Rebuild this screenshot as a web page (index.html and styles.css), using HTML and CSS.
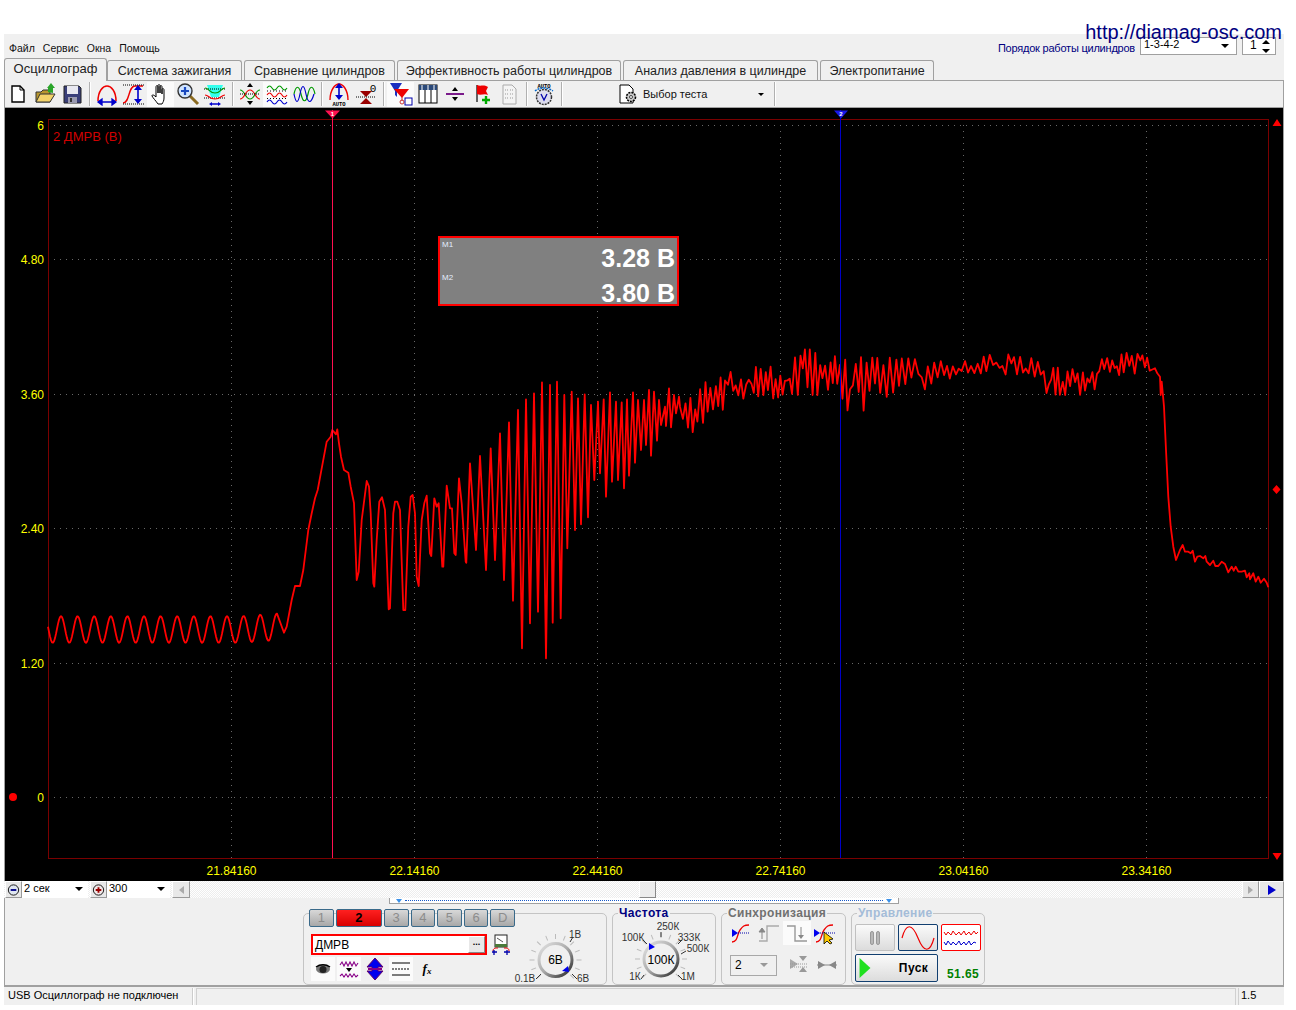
FILE: index.html
```html
<!DOCTYPE html>
<html lang="ru">
<head>
<meta charset="utf-8">
<title>Осциллограф</title>
<link rel="stylesheet" href="styles.css">
</head>
<body>
<svg class="defs" width="0" height="0" aria-hidden="true">
  <defs>
    <linearGradient id="ring" x1="0" y1="0" x2="1" y2="1">
      <stop offset="0" stop-color="#e4e4e4"/><stop offset=".5" stop-color="#aaa"/><stop offset="1" stop-color="#222"/>
    </linearGradient>
    <line id="tick" x1="0" y1="-21" x2="0" y2="-26" stroke="#bbb"/>
    <g id="ticks">
      <use href="#tick" transform="rotate(-135)"/><use href="#tick" transform="rotate(-112)"/><use href="#tick" transform="rotate(-90)"/><use href="#tick" transform="rotate(-68)"/><use href="#tick" transform="rotate(-45)"/><use href="#tick" transform="rotate(-22)"/><use href="#tick" transform="rotate(0)"/><use href="#tick" transform="rotate(22)"/><use href="#tick" transform="rotate(45)"/><use href="#tick" transform="rotate(68)"/><use href="#tick" transform="rotate(90)"/><use href="#tick" transform="rotate(112)"/><use href="#tick" transform="rotate(135)"/>
    </g>
  </defs>
</svg>
<div class="app">
  <a class="site-link">http://diamag-osc.com</a>

  <div class="menubar">
    <nav class="menu"><span>Файл</span><span>Сервис</span><span>Окна</span><span>Помощь</span></nav>
    <div class="order">
      <span class="order-label">Порядок работы цилиндров</span>
      <div class="order-combo"><span>1-3-4-2</span><i class="arrow"></i></div>
      <div class="order-spin"><span>1</span><div class="spin-arrows"><i class="arrow up"></i><i class="arrow"></i></div></div>
    </div>
  </div>

  <div class="tabs">
    <div class="tab active">Осциллограф</div>
    <div class="tab t2">Система зажигания</div>
    <div class="tab t3">Сравнение цилиндров</div>
    <div class="tab t4">Эффективность работы цилиндров</div>
    <div class="tab t5">Анализ давления в цилиндре</div>
    <div class="tab t6">Электропитание</div>
  </div>

  <div class="toolbar">
    <div class="tb"><svg viewBox="0 0 24 24"><path d="M6 4h8l4 4v12H6z" fill="#fff" stroke="#000" stroke-width="1.4"/><path d="M14 4v4h4" fill="none" stroke="#000"/></svg></div>
    <div class="tb"><svg viewBox="0 0 24 24"><path d="M3 10h5l2-2h7v12H3z" fill="#b8972e" stroke="#333"/><path d="M3 20l4-8h15l-5 8z" fill="#f2d36a" stroke="#333"/><path d="M15 10V6h-1l4-5 4 5h-2v5z" fill="#2aa52a"/></svg></div>
    <div class="tb"><svg viewBox="0 0 24 24"><path d="M4 4h15l2 2v15H4z" fill="#3a3f7a" stroke="#222"/><rect x="7" y="4" width="11" height="8" fill="#e8e8f0"/><rect x="8" y="15" width="9" height="6" fill="#9a9ab0"/><rect x="10" y="16" width="2" height="4" fill="#333"/></svg></div>
    <i class="sep"></i>
    <div class="tb"><svg viewBox="0 0 24 24"><path d="M3 19C3 9 8 4 12 4s9 5 9 15" fill="none" stroke="#e00" stroke-width="1.5"/><path d="M3 20h18M3 20l4-3v6zM21 20l-4-3v6z" fill="#00c" stroke="#00c" stroke-width="1.3"/></svg></div>
    <div class="tb"><svg viewBox="0 0 24 24"><path d="M1 21C8 21 6 4 13 4h8" fill="none" stroke="#e00" stroke-width="1.4"/><path d="M1 3h22M1 22h22" stroke="#000" stroke-dasharray="1 1" fill="none"/><path d="M16 4v17" stroke="#00c" stroke-width="1.6"/><path d="M16 3l-4 5h8zM16 22l-4-5h8z" fill="#00c"/></svg></div>
    <div class="tb on"><svg viewBox="0 0 24 24"><path d="M9 22c-2-3-5-6-6-8 0-2 2-1 4 1V5c0-2 2-2 2 0v6-7c0-2 2-2 2 0v7-6c0-2 2-2 2 0v7-4c0-2 2-2 2 0v8c0 3-1 4-2 6z" fill="#fff" stroke="#000"/></svg></div>
    <div class="tb"><svg viewBox="0 0 24 24"><path d="M14 14l8 8" stroke="#8a6a20" stroke-width="3"/><circle cx="9" cy="9" r="7" fill="#cfe4ff" stroke="#333" stroke-width="1.4"/><path d="M5 9h8M9 5v8" stroke="#1a4ac0" stroke-width="2.2"/></svg></div>
    <div class="tb"><svg viewBox="0 0 24 24"><path d="M4 3h16l-4 12H8z" fill="#3fe"/><path d="M1 7h22M1 16h22" stroke="#000" stroke-dasharray="1 1"/><path d="M2 6c4 0 4 5 10 5s6-5 10-5" fill="none" stroke="#090" stroke-width="1.2"/><path d="M2 13c4 0 4 4 10 4s6-4 10-4" fill="none" stroke="#e00" stroke-width="1.2"/><path d="M8 22h8" stroke="#00c" stroke-width="1.5"/><path d="M6 22l3-2v4zM18 22l-3-2v4z" fill="#00c"/></svg></div>
    <i class="sep"></i>
    <div class="tb"><svg viewBox="0 0 24 24"><path d="M2 8c5 0 5 9 10 9s5-9 10-9" fill="none" stroke="#090" stroke-width="1.2"/><path d="M2 17c5 0 5-9 10-9s5 9 10 9" fill="none" stroke="#e00" stroke-width="1.2"/><path d="M12 1L9 5h6zM12 23l-3-4h6z" fill="#000"/><path d="M2 12h20" stroke="#000" stroke-dasharray="1 1"/></svg></div>
    <div class="tb on"><svg viewBox="0 0 24 24"><path d="M2 6q2.500-4 5 0t5 0 5 0 5 0" fill="none" stroke="#090" stroke-width="1.1"/><path d="M2 13q2.500-4 5 0t5 0 5 0 5 0" fill="none" stroke="#e00" stroke-width="1.1"/><path d="M2 20q2.500-4 5 0t5 0 5 0 5 0" fill="none" stroke="#00c" stroke-width="1.1"/><path d="M2 9h20M2 16.500h20" stroke="#000" stroke-dasharray="1 2"/></svg></div>
    <div class="tb"><svg viewBox="0 0 24 24"><path d="M2 12C4 3 7 3 9 12s5 9 7 0 5-9 7 0" fill="none" stroke="#090" stroke-width="1.2"/><path d="M2 12C4 22 6 22 8 12S12 2 14 12s5 10 8 0" fill="none" stroke="#00c" stroke-width="1.2"/></svg></div>
    <i class="sep"></i>
    <div class="tb"><svg viewBox="0 0 24 24"><path d="M3 18C3 8 8 2 12 2s9 6 9 16" fill="none" stroke="#e00" stroke-width="1.4"/><path d="M12 3v14" stroke="#00c" stroke-width="1.6"/><path d="M12 1L8 6h8zM12 18l-4-5h8z" fill="#00c"/><text x="12" y="24" class="tiny">AUTO</text></svg></div>
    <div class="tb"><svg viewBox="0 0 24 24"><path d="M6 9l6 6 6-6zM6 22l6-6 6 6z" fill="#900"/><path d="M2 15h20" stroke="#000" stroke-dasharray="1 1"/><text x="19" y="10" class="zero">0</text></svg></div>
    <i class="sep"></i>
    <div class="tb on"><svg viewBox="0 0 24 24"><path d="M1 1h12L8 9v6L6 13V9z" fill="#1a2ec0"/><path d="M5 7h15l-7 9z" fill="#e00"/><path d="M13 15v4" stroke="#c33"/><circle cx="13" cy="20" r="2" fill="none" stroke="#c33"/><rect x="16" y="16" width="7" height="7" fill="#fff" stroke="#00a"/></svg></div>
    <div class="tb"><svg viewBox="0 0 24 24"><rect x="3" y="3" width="18" height="18" fill="#fff" stroke="#000"/><rect x="3" y="3" width="18" height="5" fill="#2c4a7a"/><path d="M9 8v13M15 8v13" stroke="#000"/><path d="M6 3v5M12 3v5M18 3v5" stroke="#fff"/></svg></div>
    <div class="tb"><svg viewBox="0 0 24 24"><path d="M3 12h18" stroke="#7a1a8a" stroke-width="2"/><path d="M12 5l-3 4h6zM12 19l-3-4h6z" fill="#000"/></svg></div>
    <div class="tb"><svg viewBox="0 0 24 24"><path d="M7 3v17" stroke="#333" stroke-width="1.5"/><path d="M7 3c4 2 6-1 11 2l-2 4 2 4c-4-2-7 1-11-1z" fill="#e00"/><path d="M16 14v8M12 18h8" stroke="#0a0" stroke-width="2.4"/></svg></div>
    <div class="tb"><svg viewBox="0 0 24 24"><path d="M6 3h9l4 4v15H6z" fill="#f4f4f4" stroke="#aaa"/><path d="M8 8h3M8 12h3M8 16h3M13 8h3M13 12h3M13 16h3" stroke="#999" stroke-dasharray="1 1"/></svg></div>
    <i class="sep"></i>
    <div class="tb"><svg viewBox="0 0 24 24"><text x="12" y="5.500" class="tiny">AUTO</text><circle cx="12" cy="15" r="7.500" fill="#dde" stroke="#333" stroke-width="1.500" stroke-dasharray="2 1"/><path d="M3 9c5-4 13-4 18 0" fill="none" stroke="#06c" stroke-dasharray="2 1" stroke-width="1.500"/><path d="M9 12l3 6 3-6" fill="none" stroke="#00a" stroke-width="1.300"/></svg></div>
    <i class="sep"></i>
    <div class="test-pick">
      <svg viewBox="0 0 20 24" class="test-icon"><path d="M2 3h9l4 4v14H2z" fill="#fff" stroke="#000"/><circle cx="13" cy="15" r="4.500" fill="#ccc" stroke="#000" stroke-dasharray="2 1" stroke-width="1.600"/><circle cx="13" cy="15" r="1.500" fill="#fff" stroke="#000" stroke-width=".7"/></svg>
      <span>Выбор теста</span><i class="arrow small"></i>
    </div>
    <i class="sep"></i>
  </div>

  <div class="scope">
    <svg class="plot" viewBox="5 108 1278 773" width="1278" height="773">
      <g class="grid">
        <path d="M48 125.500H1268M48 259.500H1268M48 394.500H1268M48 528.500H1268M48 663.500H1268M48 797.500H1268"/>
        <path d="M231.500 119V863M414.500 119V863M597.500 119V863M780.500 119V863M963.500 119V863M1146.500 119V863"/>
      </g>
      <rect x="48.500" y="119.500" width="1220" height="739" class="frame"/>
      <g class="ylabels">
        <text x="44" y="130">6</text><text x="44" y="264">4.80</text><text x="44" y="399">3.60</text><text x="44" y="533">2.40</text><text x="44" y="668">1.20</text><text x="44" y="802">0</text>
      </g>
      <g class="xlabels">
        <text x="231.500" y="875">21.84160</text><text x="414.500" y="875">22.14160</text><text x="597.500" y="875">22.44160</text><text x="780.500" y="875">22.74160</text><text x="963.500" y="875">23.04160</text><text x="1146.500" y="875">23.34160</text><text x="1329.500" y="875">23.64160</text>
      </g>
      <text x="53" y="141" class="ch-title">2 ДМРВ (В)</text>
      <polyline id="trace" class="trace" points=""/>
      <path d="M332.500 110V858" class="cur1"/>
      <path d="M325 110.500h15l-7.500 8z" class="mark1"/>
      <text x="332.500" y="116" class="mark-num">1</text>
      <path d="M840.500 110V858" class="cur2"/>
      <path d="M834 110.500h14l-7 8z" class="mark2"/>
      <text x="840.800" y="116" class="mark-num">2</text>
      <path d="M1277 119l4.500 7h-9zM1277 860l4.500-7h-9zM1276.500 485l4 4.500-4 4.500-4-4.500z" class="side-mark"/>
      <circle cx="13" cy="797" r="4" class="side-mark"/>
    </svg>
    <div class="readout">
      <div class="m-row"><span class="m-name">M1</span><span class="m-val">3.28 В</span></div>
      <div class="m-row"><span class="m-name">M2</span><span class="m-val">3.80 В</span></div>
    </div>
  </div>

  <div class="scrollrow">
    <div class="sq"><svg viewBox="0 0 16 16"><circle cx="8" cy="8" r="5.500" fill="#dfe6f0" stroke="#111"/><path d="M5 8h6" stroke="#008" stroke-width="2"/></svg></div>
    <div class="rcombo w1"><span>2 сек</span><i class="arrow"></i></div>
    <div class="sq plus"><svg viewBox="0 0 16 16"><circle cx="8" cy="8" r="5.500" fill="#f0e6e6" stroke="#111"/><path d="M5 8h6M8 5v6" stroke="#900" stroke-width="2"/></svg></div>
    <div class="rcombo w2"><span>300</span><i class="arrow"></i></div>
    <div class="sq left"><i class="tri-l"></i></div>
    <div class="track"><div class="thumb"></div></div>
    <div class="sq"><i class="tri-r gray"></i></div>
    <div class="sq wide"><i class="tri-r"></i></div>
  </div>

  <div class="panel">
    <div class="strip"><i class="tri-d"></i><span class="dots"></span><i class="tri-d"></i></div>
    <div class="groups">

      <section class="group g1">
        <div class="g1-left">
          <div class="channels">
            <b class="ch">1</b><b class="ch red">2</b><b class="ch">3</b><b class="ch">4</b><b class="ch">5</b><b class="ch">6</b><b class="ch">D</b>
          </div>
          <div class="name-row">
            <div class="name-box"><span>ДМРВ</span><b class="more">...</b></div>
            <svg viewBox="0 0 20 22" class="i20"><rect x="4" y="1" width="12" height="12" fill="#fff" stroke="#222"/><path d="M6 4l6 4" stroke="#555"/><rect x="4" y="10" width="12" height="3" fill="#4a7a3a"/><path d="M2 17c0-3 3-3 5-3M18 17c0-3-2-3-5-3" fill="none" stroke="#e00"/><path d="M3 21v-5M1 18h5M16 21v-5M13 18h6" stroke="#00a" stroke-width="1.300"/></svg>
          </div>
          <div class="tools">
            <div class="tool on"><svg viewBox="0 0 20 20"><ellipse cx="10" cy="10" rx="7" ry="4.500" fill="#777"/><circle cx="10" cy="10.500" r="3.500" fill="#222"/><path d="M3 8c4-3 10-3 14 0" fill="none" stroke="#000" stroke-width="1.500"/></svg></div>
            <div class="tool on"><svg viewBox="0 0 20 20"><path d="M1 6l2-3 2 4 2-4 2 4 2-4 2 4 2-4 2 4 2-3" fill="none" stroke="#808" stroke-width="1.100"/><path d="M1 17l2-2 2 3 2-3 2 3 2-3 2 3 2-3 2 3 2-2" fill="none" stroke="#808" stroke-width="1.100"/><path d="M7 9h6l-3 4z" fill="#000"/></svg></div>
            <div class="tool plain"><svg viewBox="0 0 20 24"><path d="M10 1L2 10h5v4H2l8 9 8-9h-5v-4h5z" fill="#00e" stroke="#606"/><path d="M3 12h14" stroke="#808" stroke-width="2"/></svg></div>
            <div class="tool on spaced"><svg viewBox="0 0 20 20"><path d="M1 4h18M1 16h18" stroke="#000" stroke-width="1.200"/><path d="M1 10h18" stroke="#000" stroke-dasharray="2 1"/></svg></div>
            <div class="tool plain fx"><i>f</i><i class="x">x</i></div>
          </div>
        </div>
        <svg class="knob k1" viewBox="0 0 88 72" width="88" height="72">
          <use href="#ticks" transform="translate(41.500 46)"/>
          <path d="M56 28l3-5M58 60l5 5M27 60l-5 5" stroke="#333"/>
          <circle cx="41.500" cy="46" r="16.500" class="ring"/>
          <path d="M48 57l6-5 1 6z" fill="#00e"/>
          <text x="41.500" y="50" class="kval">6В</text>
          <text x="61" y="24" class="kl">1В</text><text x="11" y="68" class="kl">0.1В</text><text x="69" y="68" class="kl">6В</text>
        </svg>
      </section>

      <section class="group g2">
        <h4 class="legend navy">Частота</h4>
        <svg class="knob" viewBox="0 0 104 72" width="104" height="72">
          <use href="#ticks" transform="translate(49 46)"/>
          <path d="M49 19v5M31 27l4 4M66 31l4-4M74 38l-5 3M32 62l-3 4M66 62l4 4" stroke="#333"/>
          <circle cx="49" cy="46" r="17" class="ring"/>
          <path d="M37 30l6 4-6 3z" fill="#00e"/>
          <text x="49" y="50.500" class="kval big">100К</text>
          <text x="21" y="28" class="kl">100К</text><text x="56" y="17" class="kl">250К</text><text x="77" y="28" class="kl">333К</text><text x="86" y="39" class="kl">500К</text><text x="23" y="67" class="kl">1К</text><text x="76" y="67" class="kl">1М</text>
        </svg>
      </section>

      <section class="group g3">
        <h4 class="legend grayd">Синхронизация</h4>
        <div class="sync-row">
          <div class="sc"><svg viewBox="0 0 24 24"><path d="M3 21c6 0 5-8 8-12s4-5 9-5" fill="none" stroke="#e00" stroke-width="1.300"/><path d="M3 8l6 4-6 4z" fill="#00e"/><path d="M9 12h11" stroke="#00a" stroke-dasharray="1 1"/></svg></div>
          <div class="sc"><svg viewBox="0 0 24 24"><path d="M2 20h8V5h12" fill="none" stroke="#aaa" stroke-width="1.400"/><path d="M5 18V9M5 7l-3 4h6z" fill="#888" stroke="#888"/></svg></div>
          <div class="sc on"><svg viewBox="0 0 24 24"><path d="M2 5h8v15h12" fill="none" stroke="#999" stroke-width="1.400"/><path d="M16 6v9" stroke="#888"/><path d="M16 18l-3-4h6z" fill="#888"/></svg></div>
          <div class="sc"><svg viewBox="0 0 24 24"><path d="M3 21c6 0 5-8 8-12s4-5 9-5" fill="none" stroke="#e00" stroke-width="1.300"/><path d="M1 8l6 4-6 4z" fill="#00e"/><path d="M7 12h15" stroke="#00a" stroke-dasharray="1 1"/><path d="M11 11v12l3-3 3 3 2-1-3-3 4-1z" fill="#fc0" stroke="#000" stroke-width=".8"/></svg></div>
        </div>
        <div class="sync-row second">
          <div class="scombo"><span>2</span><i class="arrow gray"></i></div>
          <div class="sc push"><svg viewBox="0 0 24 24"><path d="M3 6l8 5-8 5z" fill="#aaa"/><path d="M3 11h18M3 14h18" stroke="#999" stroke-dasharray="1 1"/><path d="M16 8l-4-5h8zM16 14l-4 5h8z" fill="#999"/></svg></div>
          <div class="sc"><svg viewBox="0 0 24 24"><path d="M2 12h20" stroke="#888"/><path d="M3 8l7 4-7 4zM21 8l-7 4 7 4z" fill="#888"/></svg></div>
        </div>
      </section>

      <section class="group g4">
        <h4 class="legend bluish">Управление</h4>
        <div class="ctl-grid">
          <div class="ctl gray"><i class="pbar"></i><i class="pbar"></i></div>
          <div class="ctl navy-b"><svg viewBox="0 0 38 25"><path d="M3 13C7-2 13-2 19 13s12 15 16 0" fill="none" stroke="#e00" stroke-width="1.200"/></svg></div>
          <div class="ctl red-b"><svg viewBox="0 0 38 25"><path d="M2 7l2 3 2-3 3 3 2-4 3 4 3-3 2 3 3-4 2 4 3-3 2 3 3-4 2 3 2-2" fill="none" stroke="#e00"/><path d="M2 17l2 3 2-4 3 4 2-3 3 3 3-4 2 4 3-3 2 3 3-4 2 4 3-3 2 1" fill="none" stroke="#00c"/></svg></div>
          <div class="ctl navy-b run"><svg viewBox="0 0 12 22" class="play"><path d="M0 0l12 11L0 22z" fill="#1fe01f"/></svg><b>Пуск</b></div>
          <div class="fps">51.65</div>
        </div>
      </section>
    </div>
  </div>

  <div class="status">
    <div class="s1">USB Осциллограф не подключен</div>
    <div class="s2"></div>
    <div class="s3">1.5</div>
  </div>
</div>
<script src="trace.js"></script>
</body>
</html>
```
FILE: styles.css
```css
* { box-sizing: border-box; }
html, body { margin: 0; padding: 0; background: #fff; }
body { font-family: "Liberation Sans", Arial, sans-serif; font-size: 11px; color: #000; height: 1010px; overflow: hidden; }
.defs { position: absolute; }
.app { position: relative; width: 1280px; margin: 34px 0 0 4px; background: #f0f0f0; }
svg { display: block; }

.site-link { position: absolute; right: 2px; top: -13px; font-size: 20px; line-height: 23px; color: #000080; }

.menubar { display: flex; justify-content: space-between; height: 24px; padding: 3px 8px 0 5px; }
.menu { display: flex; gap: 8px; align-items: center; height: 21px; font-size: 10.5px; color: #111; }
.order { display: flex; align-items: flex-start; }
.order-label { margin: 5px 5px 0 0; font-size: 11px; line-height: 13px; color: #000080; letter-spacing: -.02em; }
.order-combo { display: flex; justify-content: space-between; width: 97px; height: 18px; border: 1px solid #a0a0a0; background: #fff; padding: 0 7px 0 3px; line-height: 13px; }
.order-spin { display: flex; justify-content: space-between; width: 34px; height: 18px; margin-left: 5px; border: 1px solid #a0a0a0; background: #fff; padding: 0 5px 0 7px; font-size: 12px; line-height: 14px; }
.spin-arrows { display: flex; flex-direction: column; gap: 5px; padding-top: 2px; }
.arrow { display: block; width: 0; height: 0; border: 4px solid transparent; border-top-color: #000; border-bottom: 0; margin-top: 6px; }
.arrow.up { border-top: 0; border-bottom: 4px solid #000; margin-top: 0; }
.spin-arrows .arrow { margin-top: 0; }
.arrow.small { border-width: 3px; border-bottom: 0; }
.arrow.gray { border-top-color: #999; }

.tabs { display: flex; align-items: flex-end; height: 22px; font-size: 12.5px; color: #222; }
.tab { display: flex; align-items: center; height: 20px; margin-left: 2px; border: 1px solid #a0a0a0; border-bottom: 0; border-radius: 3px 3px 0 0; background: #f0f0f0; justify-content: center; }
.tab.active { width: 103px; height: 23px; margin: 0 0 -1px; padding-bottom: 3px; background: #f0f0f0; position: relative; z-index: 1; font-size: 13px; }
.t2 { width: 135px; margin-left: 0; }
.t3 { width: 151px; }
.t4 { width: 224px; }
.t5 { width: 195px; }
.t6 { width: 114px; }

.toolbar { display: flex; align-items: center; height: 28px; border: 1px solid #a0a0a0; border-width: 1px 1px 1px 1px; background: #f0f0f0; padding-left: 0; }
.tb { display: flex; align-items: center; justify-content: center; width: 27px; height: 25px; margin: 0; }
.tb svg { width: 24px; height: 24px; }
.tb.on { background: #fbfbfb; }
.tb:first-child { margin-left: -1px; }
.sep { display: block; width: 1px; height: 24px; margin: 0 3px 0 4px; background: #b0b0b0; box-shadow: 1px 0 #fff; }
.tiny { font: bold 5.5px "Liberation Mono", monospace; text-anchor: middle; fill: #000; }
.zero { font: 11px "Liberation Mono", monospace; text-anchor: middle; fill: #000; }
.test-pick { display: flex; align-items: center; width: 205px; padding-left: 53px; font-size: 11px; color: #111; }
.test-icon { width: 20px; height: 24px; margin-right: 5px; }
.test-pick .arrow { margin: 1px 0 0 auto; margin-right: 6px; }

.scope { position: relative; height: 773px; background: #000; border: 1px solid #a0a0a0; border-width: 0 1px; }
.plot { background: #000; }
.grid path { fill: none; stroke: #686868; stroke-dasharray: 1 5; }
.frame { fill: none; stroke: #7a0000; }
.ylabels text { fill: #ff0; font-size: 12px; text-anchor: end; }
.xlabels text { fill: #ff0; font-size: 12px; text-anchor: middle; }
.ch-title { fill: #d00000; font-size: 13px; }
.trace { fill: none; stroke: #f00; stroke-width: 1.8; stroke-linejoin: round; }
.cur1 { stroke: #ff1050; fill: none; }
.cur2 { stroke: #0000c8; fill: none; }
.mark1 { fill: #ff1050; }
.mark2 { fill: #1818e8; }
.mark-num { fill: #fff; font: bold 6px "Liberation Sans", sans-serif; text-anchor: middle; }
.side-mark { fill: #f00; }

.readout { position: absolute; left: 433px; top: 128px; width: 241px; height: 70px; border: 2px solid #f00; background: #808080; color: #fff; padding: 2px 2px 0 2px; }
.m-row { display: flex; justify-content: space-between; height: 33px; }
.m-row + .m-row { margin-top: 0; height: 31px; }
.m-name { font-size: 8px; line-height: 10px; color: #e4eeff; }
.m-val { font-size: 25px; font-weight: bold; line-height: 26px; margin-top: 5px; }
.m-row + .m-row .m-val { margin-top: 7px; }

.scrollrow { display: flex; height: 17px; padding-left: 1px; background: repeating-conic-gradient(#fff 0 25%, #ededed 0 50%) 0 0 / 2px 2px; }
.sq { display: flex; align-items: center; justify-content: center; width: 17px; height: 17px; background: #e8e8e8; border: 1px solid; border-color: #fff #999 #999 #fff; flex: none; }
.sq svg { width: 16px; height: 16px; }
.sq.plus { margin-left: 2px; }
.sq.left { width: 18px; margin-left: 2px; }
.sq.wide { width: 25px; }
.rcombo { display: flex; justify-content: space-between; background: #fff; height: 17px; padding: 0 5px 0 2px; font-size: 11px; line-height: 15px; flex: none; }
.w1 { width: 66px; }
.w2 { width: 63px; }
.tri-l { border: 4px solid transparent; border-right: 5px solid #aaa; border-left: 0; }
.tri-r { border: 5px solid transparent; border-left: 8px solid #00c; border-right: 0; }
.tri-r.gray { border-width: 4px; border-left: 5px solid #aaa; border-right: 0; }
.track { flex: 1; padding-left: 449px; }
.thumb { width: 17px; height: 17px; background: #ececec; border: 1px solid; border-color: #fff #888 #888 #fff; }

.panel { height: 89px; border-left: 1px solid #a0a0a0; border-right: 1px solid #a0a0a0; border-bottom: 2px solid #a0a0a0; padding-left: 298px; }
.strip { display: flex; align-items: center; justify-content: space-between; width: 510px; height: 6px; margin-left: 86px; background: #fff; border: 1px solid #a0a0a0; border-top: 0; padding: 0 6px; gap: 3px; }
.dots { flex: 1; border-top: 1px dotted #1a5ac8; }
.tri-d { border: 3px solid transparent; border-top: 4px solid #3a90e8; border-bottom: 0; }
.groups { display: flex; gap: 5px; margin-top: 9px; }
.group { position: relative; height: 72px; border: 1px solid #c4c4c4; border-radius: 5px; }
.legend { position: absolute; top: -8px; left: 5px; margin: 0; padding: 0 1px; font-size: 12px; line-height: 14px; font-weight: bold; letter-spacing: .35px; background: #f0f0f0; white-space: nowrap; }
.navy { color: #000080; }
.grayd { color: #707070; }
.bluish { color: #a4bcd8; }

.g1 { display: flex; width: 304px; padding-left: 5px; }
.g1-left { width: 206px; margin-top: -5px; }
.channels { display: flex; gap: 2px; height: 18px; }
.ch { width: 25px; height: 18px; border: 1px solid #3a6a8a; border-radius: 2px; background: linear-gradient(#d8d8d8, #a8a8a8); color: #8c8c8c; font-weight: normal; font-size: 13px; line-height: 16px; text-align: center; }
.ch.red { width: 47px; background: linear-gradient(#ff2020, #d80000); color: #000; font-weight: bold; }
.name-row { display: flex; align-items: flex-start; margin: 7px 0 0 2px; }
.name-box { display: flex; justify-content: space-between; align-items: center; flex: none; width: 176px; height: 21px; border: 2px solid #f00; background: #fff; padding-left: 2px; font-size: 12px; }
.more { width: 17px; height: 17px; margin-right: 0; background: #e8e8e8; border: 1px solid; border-color: #fff #888 #888 #fff; font-size: 9px; line-height: 10px; text-align: center; }
.i20 { width: 20px; height: 22px; margin-left: 4px; flex: none; }
.tools { display: flex; align-items: center; height: 24px; margin: 1px 0 0 2px; gap: 2px; }
.tool { display: flex; align-items: center; justify-content: center; width: 24px; height: 24px; }
.tool.on { background: #fbfbfb; }
.tool svg { width: 20px; height: 20px; }
.tool.plain svg { height: 24px; }
.tool.spaced { margin-left: 0; }
.fx { font: italic bold 13px "Liberation Serif", serif; }
.fx .x { font-size: 9px; margin-top: 4px; }
.knob { flex: none; }
.k1 { margin-left: -1px; }
.ring { fill: #f0f0f0; stroke: url(#ring); stroke-width: 3; }
.kval { font-size: 12px; text-anchor: middle; fill: #000; }
.kval.big { font-size: 12px; }
.kl { font-size: 10px; text-anchor: middle; fill: #333; }

.g2 { width: 104px; }
.g2 .knob { margin: -1px; }

.g3 { width: 125px; padding: 7px 0 0 5px; }
.sync-row { display: flex; }
.sync-row.second { align-items: center; margin-top: 8px; }
.sc { display: flex; align-items: center; justify-content: center; width: 28px; height: 24px; flex: none; }
.sc svg { width: 24px; height: 24px; }
.sc.on { background: #fbfbfb; }
.scombo { display: flex; justify-content: space-between; width: 47px; height: 21px; margin-left: 3px; border: 1px solid #a8a8a8; padding: 0 8px 0 4px; font-size: 12px; line-height: 18px; }
.scombo .arrow { margin-top: 7px; }
.sc.push { margin-left: 8px; }

.g4 { width: 134px; padding: 10px 0 0 3px; }
.ctl-grid { display: grid; grid-template-columns: 40px 40px 40px; grid-template-rows: 27px 28px; gap: 3px; }
.ctl { display: flex; align-items: center; justify-content: center; border-radius: 2px; background: linear-gradient(#fafafa, #dcdcdc); }
.ctl.gray { border: 1px solid #c0c0c0; gap: 2px; }
.pbar { width: 4px; height: 14px; background: #b8b8b8; border: 1px solid #999; border-radius: 2px; }
.navy-b { border: 1px solid #123f70; }
.red-b { border: 1px solid #f00; background: #fff; }
.ctl svg { width: 38px; height: 25px; }
.run { grid-column: span 2; gap: 28px; font-size: 12px; letter-spacing: .4px; padding-right: 6px; }
.ctl svg.play { width: 12px; height: 20px; }
.fps { align-self: end; padding: 0 0 0 6px; line-height: 15px; color: #008000; font-weight: bold; font-size: 12px; letter-spacing: .4px; }

.status { display: flex; height: 17px; margin-top: 1px; font-size: 11px; line-height: 15px; }
.s1 { width: 190px; padding-left: 4px; border-right: 1px solid #fff; box-shadow: inset -1px 0 #ccc; }
.s2 { width: 1040px; margin-left: 2px; border: 1px solid #d0d0d0; border-width: 1px 1px 0 1px; }
.s3 { flex: 1; margin-left: 2px; padding-left: 2px; border-left: 1px solid #d0d0d0; }
```
FILE: trace.js
```js
// Waveform of channel 2: hand-read turning points plus seeded ripple.
(function () {
  var pts = [];
  var x, i;

  // idle ripple
  for (x = 48; x <= 277; x += 1) {
    var drift = x > 240 ? (x - 240) * 0.07 : 0;
    pts.push([x, 629.5 - 13.3 * Math.cos((2 * Math.PI * (x - 61)) / 16.6) - drift]);
  }

  // rise and growing oscillation, read from the reference (x*3-840, y*3-1020)
  var z = [12,878,20,860,35,780,45,738,60,738,70,690,85,570,95,520,105,475,113,450,125,385,140,305,152,290,157,270,168,283,172,268,177,310,183,350,192,390,205,398,212,440,222,490,230,720,236,695,245,540,260,423,267,440,272,520,280,730,283,740,290,600,298,485,306,472,315,510,326,808,330,805,340,520,345,485,352,485,360,510,370,810,376,810,385,560,392,470,398,465,405,520,410,710,416,738,425,540,433,490,440,467,450,640,454,648,463,475,470,500,476,490,487,680,490,680,500,437,510,505,516,505,523,640,527,645,537,415,545,490,557,665,559,668,570,370,588,630,600,348,618,690,632,325,645,660,660,280,672,720,687,247,699,782,714,210,726,925,738,178,750,850,762,160,774,815,786,127,798,955,810,135,818,848,831,125,842,835,853,165,862,625,875,155,885,570,894,175,903,553,914,163,924,532,933,195,943,420,954,185,960,400,971,178,978,470,990,157,996,425,1008,185,1014,420,1025,187,1032,445,1041,178,1047,407,1059,157,1065,368,1074,180,1083,330,1092,180,1098,315,1107,150,1113,347,1122,155,1131,302,1137,180,1143,255,1155,200,1158,258,1167,145,1173,262,1182,165,1188,220,1197,170];
  for (i = 0; i < z.length; i += 2) pts.push([280 + z[i] / 3, 340 + z[i + 1] / 3]);

  // noisy plateau inside an envelope
  var upper = [[680,403],[693,382],[727,373],[760,362],[793,352],[813,347],[843,357],[893,357],[927,360],[960,362],[993,354],[1027,355],[1047,365],[1060,368],[1093,370],[1098,358],[1110,357],[1120,353],[1152,353]];
  var lower = [[680,423],[693,433],[727,407],[760,400],[793,397],[827,403],[850,413],[877,410],[893,393],[927,390],[943,382],[960,375],[993,373],[1027,377],[1045,395],[1093,395],[1098,378],[1120,375],[1152,372]];
  function env(t, a) {
    for (var k = 1; k < t.length; k++) {
      if (a <= t[k][0]) {
        var f = (a - t[k - 1][0]) / (t[k][0] - t[k - 1][0]);
        return t[k - 1][1] + f * (t[k][1] - t[k - 1][1]);
      }
    }
    return t[t.length - 1][1];
  }
  var seed = 20240611;
  function rnd() {
    seed = (seed * 1664525 + 1013904223) >>> 0;
    return seed / 4294967296;
  }
  var hi = true;
  x = 680;
  while (x < 1152) {
    var u = env(upper, x), l = env(lower, x), r = l - u, q = rnd();
    var y = hi ? u + q * q * r * 0.65 : l - q * q * r * 0.65;
    pts.push([x, y]);
    hi = !hi;
    x += (x > 880 && x < 1040 ? 2.6 : 2.1) + rnd() * 0.9;
  }

  // fall and tail
  var tail = [345,85,352,100,360,110,362,165,365,125,372,200,378,330,385,470,392,560,400,620,408,660,420,630,428,615,435,635,445,635,452,640,458,632,465,665,472,650,480,648,490,655,496,648,500,665,510,675,520,662,526,678,535,678,545,665,555,672,565,697,575,680,581,692,587,680,595,695,605,695,615,692,620,712,628,700,630,718,640,700,647,725,655,710,662,728,672,716,680,728,685,742];
  for (i = 0; i < tail.length; i += 2) pts.push([1040 + tail[i] / 3, 340 + tail[i + 1] / 3]);

  document.getElementById('trace').setAttribute('points', pts.map(function (p) {
    return p[0].toFixed(1) + ',' + p[1].toFixed(1);
  }).join(' '));
})();
```
